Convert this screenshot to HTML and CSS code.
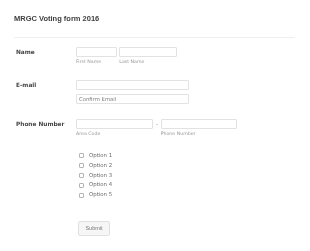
FILE: index.html
```html
<!DOCTYPE html>
<html>
<head>
<meta charset="utf-8">
<link rel="stylesheet" href="styles.css">
</head>
<body>
<div class="page">
  <div class="header"><h1 class="title">MRGC Voting form 2016</h1></div>

  <div class="row row-name">
    <div class="label">Name</div>
    <div class="fields">
      <div class="field"><input class="input w-first" type="text"><div class="sub">First Name</div></div>
      <div class="field"><input class="input w-last" type="text"><div class="sub">Last Name</div></div>
    </div>
  </div>

  <div class="row row-email">
    <div class="label">E-mail</div>
    <div class="stack">
      <input class="input w-email" type="text">
      <input class="input w-email" type="text" placeholder="Confirm Email">
    </div>
  </div>

  <div class="row row-phone">
    <div class="label">Phone Number</div>
    <div class="fields">
      <div class="field"><input class="input w-area" type="text"><div class="sub">Area Code</div></div>
      <span class="dash">-</span>
      <div class="field"><input class="input w-phone" type="text"><div class="sub">Phone Number</div></div>
    </div>
  </div>

  <div class="options">
    <div class="option"><span class="box"></span>Option 1</div>
    <div class="option"><span class="box"></span>Option 2</div>
    <div class="option"><span class="box"></span>Option 3</div>
    <div class="option"><span class="box"></span>Option 4</div>
    <div class="option"><span class="box"></span>Option 5</div>
  </div>

  <div class="actions"><button class="submit" type="button">Submit</button></div>
</div>
</body>
</html>
```

FILE: styles.css
```css
body {
  margin: 0;
  background: #fff;
  font-family: "DejaVu Sans", Verdana, sans-serif;
}

.page {
  filter: grayscale(1);
  background: #fff;
  height: 251px;
}

.header {
  margin: 0 15px 0 14px;
  height: 23px;
  padding-top: 14px;
  border-bottom: 1px solid #efefef;
}

.title {
  margin: 0;
  font: bold 7.5px/9px "Liberation Sans", Arial, sans-serif;
  color: #3e3e3e;
}

.row {
  display: flex;
  padding-left: 16px;
}

.label {
  width: 60px;
  flex: none;
  font: bold 5.8px/10px "DejaVu Sans", Verdana, sans-serif;
  color: #444;
}

.row-name { margin-top: 9px; }
.row-email { margin-top: 16px; }
.row-phone { margin-top: 15px; }

.fields {
  display: flex;
  gap: 2.6px;
}

.row-phone .fields { gap: 0; }

.stack {
  display: flex;
  flex-direction: column;
  gap: 4px;
}

.input {
  display: block;
  box-sizing: border-box;
  height: 10px;
  margin: 0;
  padding: 0 2px;
  border: 1px solid #e2e2e2;
  border-radius: 1px;
  background: #fff;
  font: 5.3px/8px "DejaVu Sans", Verdana, sans-serif;
  color: #777;
  outline: none;
}

.input::placeholder { color: #808080; }

.w-first { width: 40.7px; }
.w-last { width: 58px; }
.w-email { width: 113.3px; }
.w-area { width: 77.3px; }
.w-phone { width: 76.6px; }

.sub {
  margin-top: 2px;
  font: 4.7px/5px "DejaVu Sans", Verdana, sans-serif;
  color: #999;
}

.dash {
  width: 7.4px;
  text-align: center;
  font: 5.5px/10px "DejaVu Sans", Verdana, sans-serif;
  color: #999;
}

.options {
  margin-top: 15px;
  padding-left: 79px;
}

.option {
  display: flex;
  align-items: center;
  height: 9.8px;
  font: 5.4px/9.8px "DejaVu Sans", Verdana, sans-serif;
  color: #6a6a6a;
}

.box {
  width: 5px;
  height: 5px;
  box-sizing: border-box;
  border: 0.6px solid #b4b4b4;
  border-radius: 1px;
  margin-right: 5px;
}

.actions {
  margin-top: 21px;
  padding-left: 78px;
}

.submit {
  display: block;
  width: 32px;
  height: 15px;
  margin: 0;
  padding: 0;
  border: 1px solid #e0e0e0;
  border-radius: 2px;
  background: #f6f6f6;
  font: 5.5px/13px "Liberation Sans", Arial, sans-serif;
  color: #777;
}
```
